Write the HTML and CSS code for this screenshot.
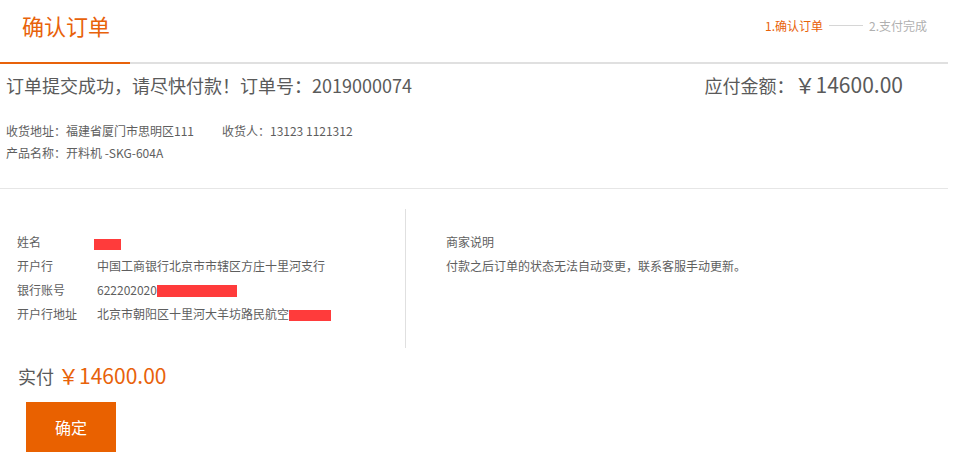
FILE: index.html
```html
<!DOCTYPE html>
<html>
<head>
  <meta charset="utf-8">
  <link rel="stylesheet" href="styles.css">
</head>
<body>
  <div class="page">
    <div class="header">
      <h1 class="title">确认订单</h1>
      <div class="steps">
        <span class="step active">1.确认订单</span>
        <span class="step-line"></span>
        <span class="step">2.支付完成</span>
      </div>
    </div>
    <div class="tabline"><span class="tabline-on"></span></div>

    <div class="summary">
      <div class="order-row">
        <div class="order-msg">订单提交成功，请尽快付款！订单号：2019000074</div>
        <div class="order-amount">应付金额：<span class="amount-num">￥14600.00</span></div>
      </div>
      <div class="info">
        <p>收货地址：福建省厦门市思明区111<span class="receiver">收货人：13123 1121312</span></p>
        <p>产品名称：开料机 -SKG-604A</p>
      </div>
    </div>

    <div class="paybox">
      <div class="bank">
        <div class="row"><span class="label">姓名</span><span class="value"><span class="mask mask-name"></span></span></div>
        <div class="row"><span class="label">开户行</span><span class="value">中国工商银行北京市市辖区方庄十里河支行</span></div>
        <div class="row"><span class="label">银行账号</span><span class="value">622202020<span class="mask mask-acc"></span></span></div>
        <div class="row"><span class="label">开户行地址</span><span class="value">北京市朝阳区十里河大羊坊路民航空<span class="mask mask-addr"></span></span></div>
      </div>
      <div class="notice">
        <div class="row">商家说明</div>
        <div class="row">付款之后订单的状态无法自动变更，联系客服手动更新。</div>
      </div>
    </div>

    <div class="total">实付 <span class="total-num">￥14600.00</span></div>
    <button type="button" class="btn-ok">确定</button>
  </div>
</body>
</html>
```

FILE: styles.css
```css
body {
  margin: 0;
  padding: 0;
  background: #fff;
  font-family: "Noto Sans CJK SC", "Liberation Sans", sans-serif;
  color: #555;
}

.page {
  width: 948px;
}

.header {
  height: 62px;
  display: flex;
  justify-content: space-between;
}

.title {
  margin: 10px 0 0 22px;
  font-size: 22px;
  line-height: 30px;
  font-weight: normal;
  color: #e8620a;
}

.steps {
  display: flex;
  align-items: center;
  height: 24px;
  margin-top: 13px;
  padding-right: 21px;
  font-size: 12px;
  color: #b0b0b0;
}

.step.active {
  color: #e8620a;
}

.step-line {
  width: 34px;
  height: 1px;
  margin: 0 6px;
  background: #d6d6d6;
}

.tabline {
  height: 2px;
  background: #e0e0e0;
}

.tabline-on {
  display: block;
  width: 130px;
  height: 2px;
  background: #e8620a;
}

.summary {
  padding: 8px 0 0 6px;
  border-bottom: 1px solid #e6e6e6;
}

.order-row {
  display: flex;
  justify-content: space-between;
  align-items: baseline;
  height: 24px;
  padding-right: 45px;
}

.order-msg {
  font-size: 18px;
  line-height: 24px;
  color: #5a5a5a;
}

.order-amount {
  font-size: 18px;
  line-height: 24px;
  color: #5a5a5a;
}

.amount-num {
  font-size: 21px;
}

.info {
  margin: 24px 0 24px;
  font-size: 12px;
  line-height: 22px;
  color: #5e5e5e;
}

.info p {
  margin: 0;
}

.receiver {
  margin-left: 28px;
}

.paybox {
  display: flex;
  margin-top: 20px;
}

.bank {
  width: 405px;
  height: 118px;
  padding-top: 21px;
  border-right: 1px solid #e0e0e0;
}

.row {
  font-size: 12px;
  line-height: 24px;
  white-space: nowrap;
  color: #5e5e5e;
}

.bank .row {
  display: flex;
  padding-left: 17px;
}

.label {
  width: 80px;
}

.value {
  display: flex;
  align-items: center;
}

.notice {
  padding: 21px 0 0 40px;
}

.mask {
  display: inline-block;
  background: #ff3b3b;
}

.mask-name {
  width: 27px;
  height: 11px;
  margin: 5px 0 0 -3px;
}

.mask-acc {
  width: 80px;
  height: 12px;
  margin-top: 2px;
}

.mask-addr {
  width: 42px;
  height: 11px;
  margin-top: 2px;
}

.total {
  height: 30px;
  margin: 12px 0 0 18px;
  font-size: 18px;
  line-height: 30px;
  color: #5a5a5a;
}

.total-num {
  font-size: 21px;
  color: #e8620a;
}

.btn-ok {
  display: block;
  margin: 12px 0 0 26px;
  width: 90px;
  height: 50px;
  border: none;
  background: #e96100;
  color: #fff;
  font-family: "Noto Sans CJK SC", sans-serif;
  font-size: 16px;
  cursor: pointer;
}
```
